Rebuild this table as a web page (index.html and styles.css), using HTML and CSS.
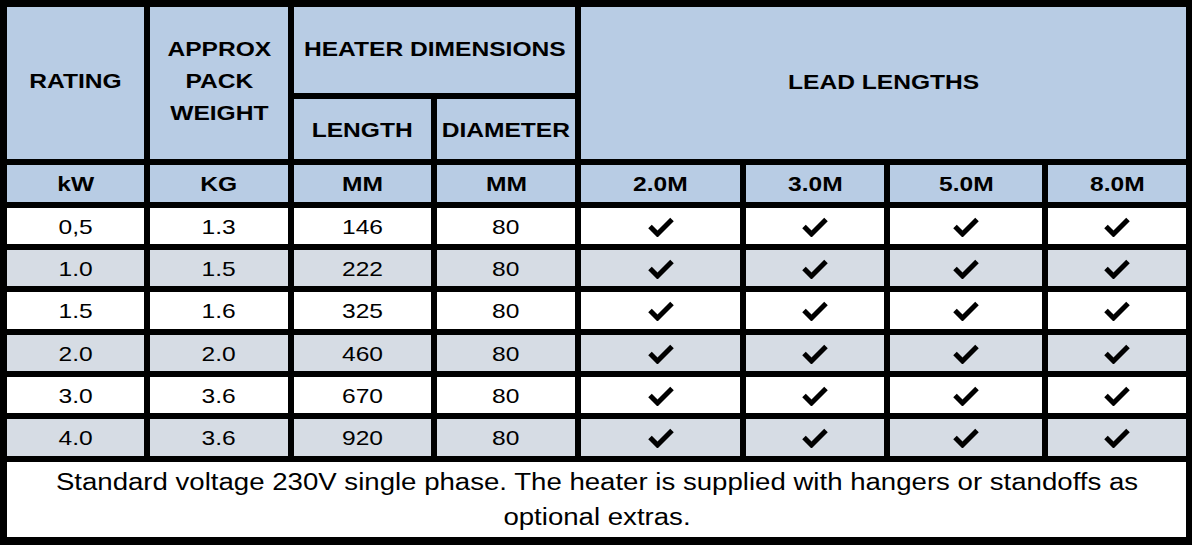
FILE: index.html
```html
<!DOCTYPE html>
<html lang="en">
<head>
<meta charset="utf-8">
<title>Heater specification</title>
<link rel="stylesheet" href="styles.css">
</head>
<body>
<div class="spec">
  <div class="cell head c-rating"><span class="sx">RATING</span></div>
  <div class="cell head c-weight"><span class="sx lines">APPROX<br>PACK<br>WEIGHT</span></div>
  <div class="cell head c-dims"><span class="sx">HEATER DIMENSIONS</span></div>
  <div class="cell head c-lead"><span class="sx">LEAD LENGTHS</span></div>
  <div class="cell head c-len"><span class="sx">LENGTH</span></div>
  <div class="cell head c-dia"><span class="sx">DIAMETER</span></div>

  <div class="cell head unit"><span class="sx">kW</span></div>
  <div class="cell head unit"><span class="sx">KG</span></div>
  <div class="cell head unit"><span class="sx">MM</span></div>
  <div class="cell head unit"><span class="sx">MM</span></div>
  <div class="cell head unit"><span class="sx">2.0M</span></div>
  <div class="cell head unit"><span class="sx">3.0M</span></div>
  <div class="cell head unit"><span class="sx">5.0M</span></div>
  <div class="cell head unit"><span class="sx">8.0M</span></div>

  <div class="cell"><span class="sx">0,5</span></div>
  <div class="cell"><span class="sx">1.3</span></div>
  <div class="cell"><span class="sx">146</span></div>
  <div class="cell"><span class="sx">80</span></div>
  <div class="cell"><svg class="tick" viewBox="0 0 26 21"><path d="M2 10.5 L9.5 18 L24 3.5"/></svg></div>
  <div class="cell"><svg class="tick" viewBox="0 0 26 21"><path d="M2 10.5 L9.5 18 L24 3.5"/></svg></div>
  <div class="cell"><svg class="tick" viewBox="0 0 26 21"><path d="M2 10.5 L9.5 18 L24 3.5"/></svg></div>
  <div class="cell"><svg class="tick" viewBox="0 0 26 21"><path d="M2 10.5 L9.5 18 L24 3.5"/></svg></div>

  <div class="cell alt"><span class="sx">1.0</span></div>
  <div class="cell alt"><span class="sx">1.5</span></div>
  <div class="cell alt"><span class="sx">222</span></div>
  <div class="cell alt"><span class="sx">80</span></div>
  <div class="cell alt"><svg class="tick" viewBox="0 0 26 21"><path d="M2 10.5 L9.5 18 L24 3.5"/></svg></div>
  <div class="cell alt"><svg class="tick" viewBox="0 0 26 21"><path d="M2 10.5 L9.5 18 L24 3.5"/></svg></div>
  <div class="cell alt"><svg class="tick" viewBox="0 0 26 21"><path d="M2 10.5 L9.5 18 L24 3.5"/></svg></div>
  <div class="cell alt"><svg class="tick" viewBox="0 0 26 21"><path d="M2 10.5 L9.5 18 L24 3.5"/></svg></div>

  <div class="cell"><span class="sx">1.5</span></div>
  <div class="cell"><span class="sx">1.6</span></div>
  <div class="cell"><span class="sx">325</span></div>
  <div class="cell"><span class="sx">80</span></div>
  <div class="cell"><svg class="tick" viewBox="0 0 26 21"><path d="M2 10.5 L9.5 18 L24 3.5"/></svg></div>
  <div class="cell"><svg class="tick" viewBox="0 0 26 21"><path d="M2 10.5 L9.5 18 L24 3.5"/></svg></div>
  <div class="cell"><svg class="tick" viewBox="0 0 26 21"><path d="M2 10.5 L9.5 18 L24 3.5"/></svg></div>
  <div class="cell"><svg class="tick" viewBox="0 0 26 21"><path d="M2 10.5 L9.5 18 L24 3.5"/></svg></div>

  <div class="cell alt"><span class="sx">2.0</span></div>
  <div class="cell alt"><span class="sx">2.0</span></div>
  <div class="cell alt"><span class="sx">460</span></div>
  <div class="cell alt"><span class="sx">80</span></div>
  <div class="cell alt"><svg class="tick" viewBox="0 0 26 21"><path d="M2 10.5 L9.5 18 L24 3.5"/></svg></div>
  <div class="cell alt"><svg class="tick" viewBox="0 0 26 21"><path d="M2 10.5 L9.5 18 L24 3.5"/></svg></div>
  <div class="cell alt"><svg class="tick" viewBox="0 0 26 21"><path d="M2 10.5 L9.5 18 L24 3.5"/></svg></div>
  <div class="cell alt"><svg class="tick" viewBox="0 0 26 21"><path d="M2 10.5 L9.5 18 L24 3.5"/></svg></div>

  <div class="cell"><span class="sx">3.0</span></div>
  <div class="cell"><span class="sx">3.6</span></div>
  <div class="cell"><span class="sx">670</span></div>
  <div class="cell"><span class="sx">80</span></div>
  <div class="cell"><svg class="tick" viewBox="0 0 26 21"><path d="M2 10.5 L9.5 18 L24 3.5"/></svg></div>
  <div class="cell"><svg class="tick" viewBox="0 0 26 21"><path d="M2 10.5 L9.5 18 L24 3.5"/></svg></div>
  <div class="cell"><svg class="tick" viewBox="0 0 26 21"><path d="M2 10.5 L9.5 18 L24 3.5"/></svg></div>
  <div class="cell"><svg class="tick" viewBox="0 0 26 21"><path d="M2 10.5 L9.5 18 L24 3.5"/></svg></div>

  <div class="cell alt"><span class="sx">4.0</span></div>
  <div class="cell alt"><span class="sx">3.6</span></div>
  <div class="cell alt"><span class="sx">920</span></div>
  <div class="cell alt"><span class="sx">80</span></div>
  <div class="cell alt"><svg class="tick" viewBox="0 0 26 21"><path d="M2 10.5 L9.5 18 L24 3.5"/></svg></div>
  <div class="cell alt"><svg class="tick" viewBox="0 0 26 21"><path d="M2 10.5 L9.5 18 L24 3.5"/></svg></div>
  <div class="cell alt"><svg class="tick" viewBox="0 0 26 21"><path d="M2 10.5 L9.5 18 L24 3.5"/></svg></div>
  <div class="cell alt"><svg class="tick" viewBox="0 0 26 21"><path d="M2 10.5 L9.5 18 L24 3.5"/></svg></div>

  <div class="cell foot"><span class="sx note">Standard voltage 230V single phase. The heater is supplied with hangers or standoffs as optional extras.</span></div>
</div>
</body>
</html>
```

FILE: styles.css
```css
* { box-sizing: border-box; }

html, body {
  margin: 0;
  padding: 0;
  background: #ffffff;
}

.spec {
  width: 1192px;
  height: 545px;
  background: #000000;
  padding: 7px 6px 8px 7px;
  display: grid;
  grid-template-columns: 137px 138px 137px 138px 159px 138px 152px 138px;
  grid-template-rows: 86px 60px 37px 36px 36px 37px 36px 36px 37px 75px;
  gap: 6px;
  font-family: "Liberation Sans", Arial, sans-serif;
  color: #000000;
}

.cell {
  background: #ffffff;
  display: flex;
  align-items: center;
  justify-content: center;
  text-align: center;
  font-size: 21px;
  line-height: 1;
  overflow: hidden;
}

.cell.alt { background: #d6dce4; }

.cell.head {
  background: #b8cce4;
  font-weight: bold;
}

.sx {
  display: inline-block;
  transform: scaleX(1.17);
  white-space: nowrap;
}

.c-rating { grid-column: 1; grid-row: 1 / 3; padding-bottom: 6px; }
.c-weight { grid-column: 2; grid-row: 1 / 3; padding-bottom: 4px; }
.c-dims   { grid-column: 3 / 5; grid-row: 1; padding-bottom: 4px; }
.c-lead   { grid-column: 5 / 9; grid-row: 1 / 3; padding-bottom: 4px; }
.c-len    { grid-column: 3; grid-row: 2; }
.c-dia    { grid-column: 4; grid-row: 2; }

.lines { line-height: 32px; }

.tick {
  width: 26px;
  height: 21px;
  display: block;
}

.tick path {
  fill: none;
  stroke: #000000;
  stroke-width: 5;
  stroke-linejoin: miter;
  stroke-linecap: butt;
}

.foot {
  grid-column: 1 / 9;
  font-size: 23px;
}

.note {
  white-space: normal;
  width: 940px;
  line-height: 35px;
  transform: scaleX(1.2);
}
```
